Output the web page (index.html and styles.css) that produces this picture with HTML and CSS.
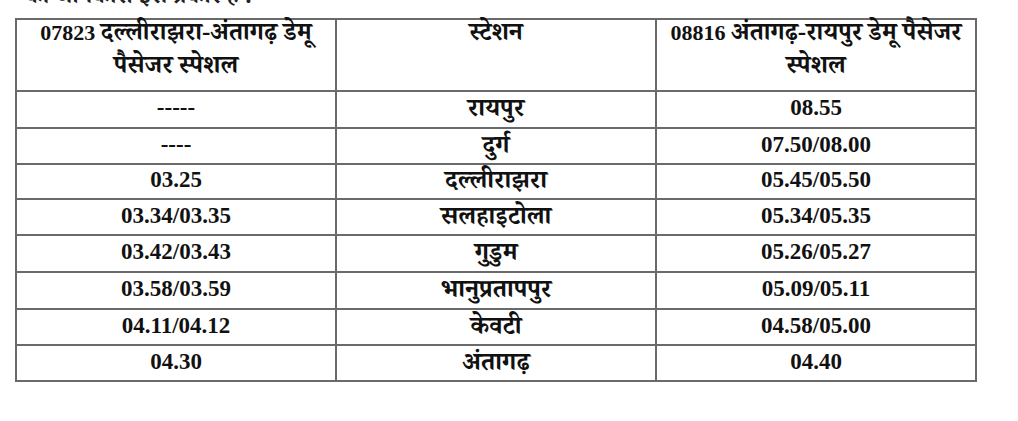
FILE: index.html
```html
<!DOCTYPE html>
<html lang="hi">
<head>
<meta charset="utf-8">
<link rel="stylesheet" href="styles.css">
</head>
<body>
<div class="page">
  <p class="intro"><span class="hi">की जानकारी इस प्रकार है :-</span></p>
  <table class="timetable">
    <colgroup><col class="c1"><col class="c2"><col class="c3"></colgroup>
    <thead>
      <tr class="head">
        <th><div class="hcell">07823 <span class="hi">दल्लीराझरा-अंतागढ़ डेमू</span><br><span class="hi">पैसेजर स्पेशल</span></div></th>
        <th><div class="hcell"><span class="hi">स्टेशन</span></div></th>
        <th><div class="hcell">08816 <span class="hi">अंतागढ़-रायपुर डेमू पैसेजर</span><br><span class="hi">स्पेशल</span></div></th>
      </tr>
    </thead>
    <tbody>
      <tr class="r37"><td>-----</td><td><span class="hi">रायपुर</span></td><td>08.55</td></tr>
      <tr class="r36"><td>----</td><td><span class="hi">दुर्ग</span></td><td>07.50/08.00</td></tr>
      <tr class="r35"><td>03.25</td><td><span class="hi">दल्लीराझरा</span></td><td>05.45/05.50</td></tr>
      <tr class="r36"><td>03.34/03.35</td><td><span class="hi">सलहाइटोला</span></td><td>05.34/05.35</td></tr>
      <tr class="r37"><td>03.42/03.43</td><td><span class="hi">गुडुम</span></td><td>05.26/05.27</td></tr>
      <tr class="r37"><td>03.58/03.59</td><td><span class="hi">भानुप्रतापपुर</span></td><td>05.09/05.11</td></tr>
      <tr class="r36"><td>04.11/04.12</td><td><span class="hi">केवटी</span></td><td>04.58/05.00</td></tr>
      <tr class="r36"><td>04.30</td><td><span class="hi">अंतागढ़</span></td><td>04.40</td></tr>
    </tbody>
  </table>
</div>
</body>
</html>
```
FILE: styles.css
```css
html, body {
  margin: 0;
  padding: 0;
  background: #ffffff;
}
body {
  font-family: "Liberation Serif", "Noto Serif Devanagari", "Noto Sans Devanagari", "Lohit Devanagari", serif;
  color: #111;
  width: 1018px;
  height: 421px;
  overflow: hidden;
}
.page {
  padding-left: 15px;
}
.hi {
  font-size: 1.1em;
}
.intro {
  margin: -16px 0 0 10px;
  height: 34px;
  font-size: 22px;
  font-weight: bold;
  line-height: 22px;
  color: #222;
}
.timetable {
  border-collapse: collapse;
  table-layout: fixed;
  width: 960px;
  font-size: 23px;
  font-weight: bold;
}
.c1, .c2, .c3 { width: 320px; }
.timetable th, .timetable td {
  border: 2px solid #6a6a6a;
  text-align: center;
  padding: 0 2px;
  white-space: nowrap;
}
.timetable th {
  vertical-align: top;
  line-height: 32px;
  padding-top: 0;
  font-size: 22px;
}
.hcell {
  margin-top: -4px;
}
.timetable th .hi {
  font-size: 1.14em;
}
.head { height: 72px; }
.timetable td {
  vertical-align: middle;
  line-height: 26px;
  padding-bottom: 3px;
}
.r35 { height: 35px; }
.r36 { height: 36px; }
.r37 { height: 37px; }
```
